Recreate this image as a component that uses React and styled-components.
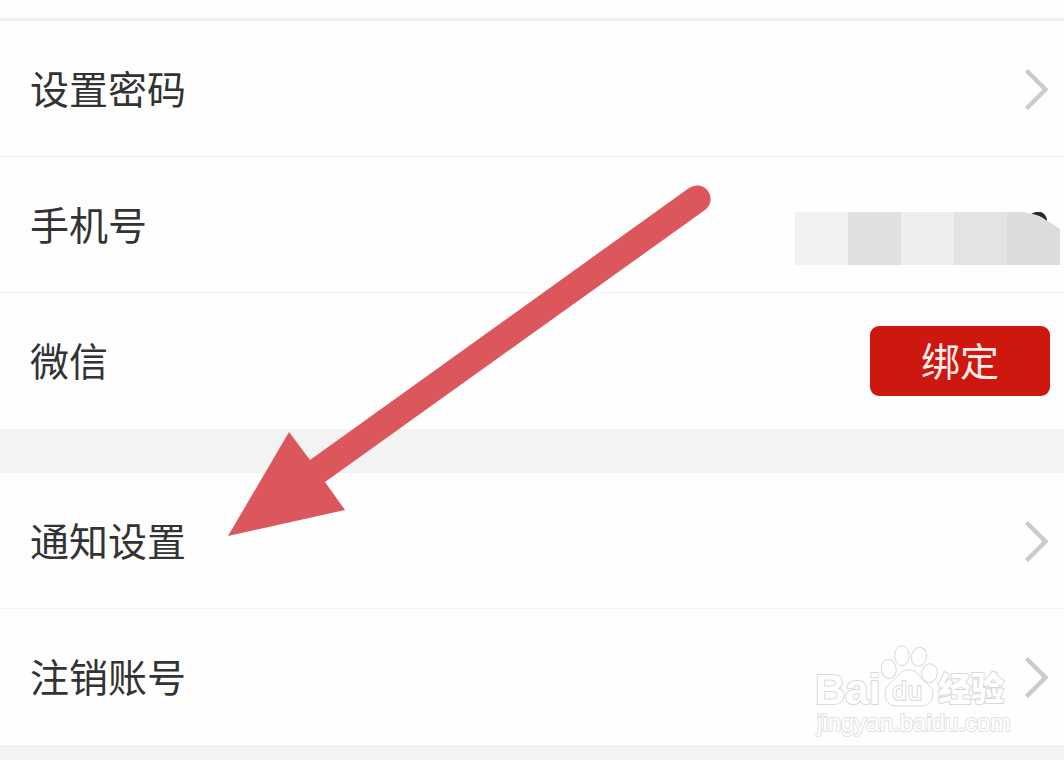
import React from "react";
import styled, { createGlobalStyle } from "styled-components";

const accountItems = [
  { id: "password", label: "设置密码", type: "link" },
  { id: "phone", label: "手机号", type: "phone" },
  { id: "wechat", label: "微信", type: "bind" },
];

const etcItems = [
  { id: "notice", label: "通知设置", type: "link" },
  { id: "withdraw", label: "注销账号", type: "link" },
];

const mosaicColors = ["#f2f2f2", "#e0e0e0", "#eeeeee", "#e3e3e3", "#dcdcdc"];

const Chevron = () => (
  <ChevronIcon viewBox="0 0 24 44" aria-hidden="true">
    <path d="M0.5 3.5 L19.5 22.5 L0.5 41.5" fill="none" stroke="#cbcbcb" strokeWidth="4.4" />
  </ChevronIcon>
);

const Mosaic = () => (
  <MosaicImage viewBox="0 0 265 53" aria-hidden="true">
    <clipPath id="mosaicShape">
      <path d="M0 0 H228 L240 3 Q252 8 265 17 V53 H0 Z" />
    </clipPath>
    <path d="M236 2 Q243 -2 248 1 Q252 4 252 9 Q245 3 236 2 Z" fill="#2b2b2b" />
    <g clipPath="url(#mosaicShape)">
      {mosaicColors.map((color, index) => (
        <rect key={color} x={index * 53} width="53" height="53" fill={color} />
      ))}
    </g>
  </MosaicImage>
);

const Pointer = () => (
  <PointerImage viewBox="0 0 484 352" aria-hidden="true">
    <path
      d="M0 351 L61 247 L82 275 L461 3 A13.5 13.5 0 0 1 477 25 L97 297 L117 325 Z"
      fill="#dc575c"
    />
  </PointerImage>
);

const Watermark = () => (
  <WatermarkImage viewBox="0 0 200 96">
    <g fill="#ffffff" stroke="#d9d9d9" strokeWidth="1">
      <ellipse cx="76.7" cy="27" rx="7.5" ry="9.5" transform="rotate(-8 76.7 27)" />
      <ellipse cx="90" cy="13.7" rx="7.3" ry="10" />
      <ellipse cx="107" cy="14.7" rx="7.5" ry="9.5" transform="rotate(12 107 14.7)" />
      <ellipse cx="117.5" cy="31.3" rx="7.8" ry="9.5" transform="rotate(8 117.5 31.3)" />
      <path d="M97 28 C105 28 108 35 112 39 C117 43 121 46 121 52 C121 60 116 64 109 64 H85 C77 64 73 59 73 52 C73 43 80 40 84 36 C88 31 90 28 97 28 Z" />
      <WatermarkText x="3" y="62" $size={42} $weight={700}>
        Bai
      </WatermarkText>
      <WatermarkText x="80" y="58" $size={24} $family="DejaVu Sans">
        du
      </WatermarkText>
      <WatermarkText x="126" y="59" $size={33} $weight={900} $family="Noto Sans CJK SC">
        经验
      </WatermarkText>
      <WatermarkText x="5" y="89" $size={24} $line="#e2e2e2">
        jingyan.baidu.com
      </WatermarkText>
    </g>
  </WatermarkImage>
);

const SettingItem = ({ item }) => {
  if (item.type === "link") {
    return (
      <Item>
        <ItemLink href={`#${item.id}`}>
          <ItemLabel>{item.label}</ItemLabel>
          <Chevron />
        </ItemLink>
      </Item>
    );
  }

  return (
    <Item>
      <ItemBox>
        <ItemLabel id={item.id}>{item.label}</ItemLabel>
        {item.type === "phone" && <Mosaic />}
        {item.type === "bind" && (
          <BindButton type="button" aria-describedby={item.id}>
            绑定
          </BindButton>
        )}
      </ItemBox>
    </Item>
  );
};

const App = () => {
  return (
    <>
      <GlobalStyle />
      <Container>
        <TopBar />
        <SettingList>
          {accountItems.map((item) => (
            <SettingItem key={item.id} item={item} />
          ))}
        </SettingList>
        <SettingList>
          {etcItems.map((item) => (
            <SettingItem key={item.id} item={item} />
          ))}
          <Watermark />
        </SettingList>
        <Pointer />
      </Container>
    </>
  );
};

export default App;

const GlobalStyle = createGlobalStyle`
  * {
    box-sizing: border-box;
  }
  body {
    margin: 0;
    background-color: #f3f3f3;
    font-family: "Noto Sans CJK SC", sans-serif;
  }
`;

const Container = styled.main`
  position: relative;
  overflow: hidden;
`;

const TopBar = styled.div`
  height: 21px;
  background-color: #fefefe;
  border-bottom: 3px solid #f0f0f0;
`;

const SettingList = styled.ul`
  position: relative;
  margin: 0;
  padding: 0;
  list-style: none;
  background-color: #fefefe;

  & + & {
    margin-top: 44px;
  }
`;

const Item = styled.li`
  border-bottom: 1px solid #f3f3f3;

  &:last-of-type {
    border-bottom-color: transparent;
  }
`;

const ItemBox = styled.div`
  position: relative;
  display: flex;
  align-items: center;
  justify-content: space-between;
  min-height: 135px;
  padding: 0 14px 0 30px;
`;

const ItemLink = styled(ItemBox).attrs({ as: "a" })`
  text-decoration: none;
`;

const ItemLabel = styled.span`
  padding-bottom: 4px;
  font-size: 39px;
  line-height: 56px;
  color: #333333;
`;

const ChevronIcon = styled.svg`
  width: 24px;
  height: 44px;
  overflow: visible;
`;

const BindButton = styled.button`
  width: 180px;
  height: 70px;
  padding: 0 0 4px;
  border: none;
  border-radius: 9px;
  background-color: #cc180f;
  color: #fdecea;
  font-family: inherit;
  font-size: 39px;
  line-height: 56px;
  cursor: pointer;
`;

const MosaicImage = styled.svg`
  position: absolute;
  top: 55px;
  right: 4px;
  width: 265px;
  height: 53px;
`;

const PointerImage = styled.svg`
  position: absolute;
  top: 185px;
  left: 228px;
  width: 484px;
  height: 352px;
  pointer-events: none;
`;

const WatermarkImage = styled.svg`
  position: absolute;
  right: 52px;
  bottom: 7px;
  width: 200px;
  height: 96px;
  pointer-events: none;
`;

const WatermarkText = styled.text`
  font-family: "${({ $family }) => $family || "Liberation Sans"}", sans-serif;
  font-size: ${({ $size }) => $size}px;
  font-weight: ${({ $weight }) => $weight || 400};
  stroke: ${({ $line }) => $line || "#d9d9d9"};
  paint-order: stroke;
  stroke-width: 2px;
`;
